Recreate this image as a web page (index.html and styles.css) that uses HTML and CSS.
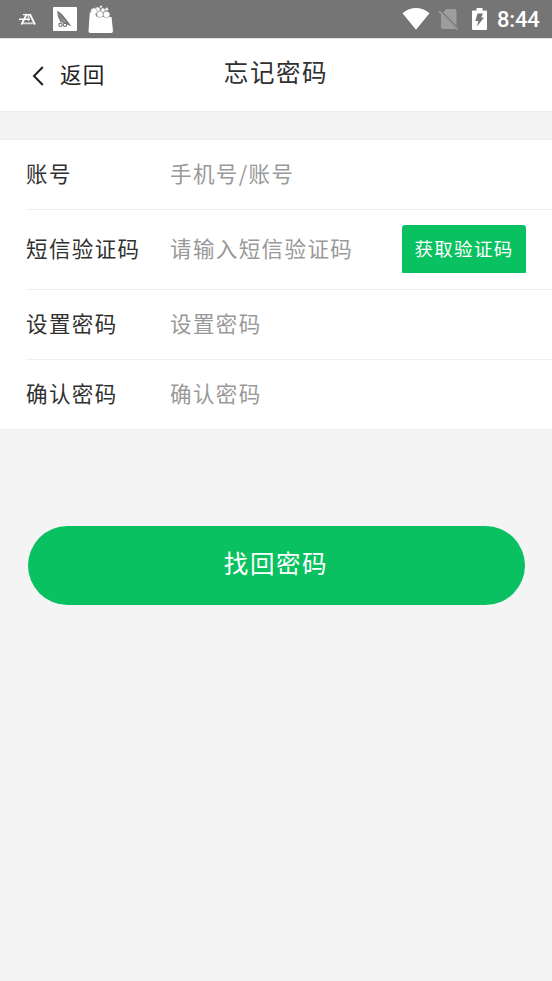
FILE: index.html
```html
<!DOCTYPE html>
<html lang="zh-CN">
<head>
<meta charset="utf-8">
<title>忘记密码</title>
<link rel="stylesheet" href="styles.css">
</head>
<body>
<div class="status">
  <svg class="ico-a" width="18" height="14" viewBox="0 0 18 14" fill="none" stroke="#fff"><path stroke-width="1.8" d="M10.8 1L16 11.5M7.8 1L2.5 11.5"/><path stroke-width="1.4" d="M4 1.6H11M0 6.3H11"/><path stroke-width="1.6" opacity=".75" d="M4 10.4H14.5M9.5 2V8"/></svg>
  <svg class="ico-pic" width="24" height="24" viewBox="0 0 24 24"><rect width="24" height="24" rx="1" fill="#fff"/><path d="M4.2 3.5Q10 7 13 12L18.5 19.5L13 17L7 14.5Q4 9 4.2 3.5Z" fill="#757575"/><path d="M5 7L13 15M5 11L12 15" stroke="#bbb" stroke-width=".6"/><g fill="none" stroke="#757575" stroke-width="1.1"><circle cx="7.5" cy="17.8" r="1.7"/><circle cx="12" cy="17.8" r="1.7"/></g></svg>
  <svg class="ico-bag" width="26" height="28" viewBox="0 0 26 28"><path d="M1.5 12H23.5L25 26Q25 28 23 28H2.5Q.3 28 .5 26Z" fill="#fff"/><g fill="#fff" stroke="#858585" stroke-width=".5"><circle cx="9.5" cy="4.8" r="2.7"/><circle cx="15" cy="5.2" r="2.2"/><circle cx="6" cy="6.3" r="3.3"/><circle cx="12" cy="9.3" r="3.2"/><circle cx="18.5" cy="9.5" r="3.3"/><circle cx="13" cy="1.7" r="1.3"/><circle cx="18.7" cy="4.2" r="1.6"/></g><path d="M1.8 7.5H6L9 12H1.5Z" fill="#fff"/></svg>
  <svg class="ico-wifi" width="28" height="22" viewBox="0 0 28 22"><path d="M.5 5.2Q14-5 27.5 5.2L14 21.8Z" fill="#fff"/></svg>
  <svg class="ico-sim" width="21" height="22" viewBox="0 0 21 22"><path d="M8.5 1H16.5Q18.5 1 18.5 3V17.8L5 4.3ZM3 5.5L18 20.5Q17.5 21 16.5 21H5Q3 21 3 19Z" fill="#9d9d9d"/><path d="M1 3L19.5 21.5" stroke="#9d9d9d" stroke-width="1.6"/></svg>
  <svg class="ico-bat" width="15" height="22" viewBox="0 0 15 22"><path d="M1 2.5H4.5V0H10.5V2.5H14Q15 2.5 15 3.5V21Q15 22 14 22H1Q0 22 0 21V3.5Q0 2.5 1 2.5Z" fill="#fff"/><path d="M5.5 5.5H11L9.2 9.5H12L5 18.5L6.3 13H3.3Z" fill="#757575"/></svg>
  <span class="time">8:44</span>
</div>
<header class="nav">
  <a class="back"><svg width="12" height="20" viewBox="0 0 12 20" fill="none" stroke="#222" stroke-width="2"><path d="M10.8 1L2 10L10.8 19"/></svg><span>返回</span></a>
  <h1>忘记密码</h1>
</header>
<main>
  <div class="form">
    <div class="row"><label>账号</label><span class="hint">手机号/账号</span></div>
    <div class="row tall"><label>短信验证码</label><span class="hint">请输入短信验证码</span><button class="code">获取验证码</button></div>
    <div class="row"><label>设置密码</label><span class="hint">设置密码</span></div>
    <div class="row"><label>确认密码</label><span class="hint">确认密码</span></div>
  </div>
  <button class="submit">找回密码</button>
</main>
</body>
</html>
```
FILE: styles.css
```css
* { box-sizing: border-box; }
body {
  margin: 0;
  min-height: 981px;
  background: #f4f4f4;
  color: #303030;
  font-family: "Noto Sans CJK SC", sans-serif;
}
svg { display: block; flex: none; }
button { border: 0; padding: 0; font-family: inherit; color: #fff; background: #09c160; }
.status {
  display: flex;
  height: 38px;
  padding-left: 19px;
  background: #757575;
  color: #fff;
}
.ico-a { margin-top: 13px; }
.ico-pic { margin: 7px 0 0 16px; }
.ico-bag { margin: 5px 0 0 11px; }
.ico-wifi { margin: 8px 0 0 288px; }
.ico-sim { margin: 8px 0 0 8px; }
.ico-bat { margin: 8px 0 0 13px; }
.time {
  margin-left: 10px;
  font: 500 22px/40px Roboto, sans-serif;
  letter-spacing: -0.2px;
}
.nav {
  display: grid;
  grid-template-columns: 1fr auto 1fr;
  height: 74px;
  border-top: 1px solid #e4e4e4;
  border-bottom: 1px solid #ebebeb;
  background: #fff;
}
.back {
  display: flex;
  align-items: center;
  height: 72px;
  padding-left: 32px;
  font-size: 21.5px;
  letter-spacing: 1.3px;
  color: #222;
}
.back svg { margin-top: 2px; }
.back span { margin-left: 16px; padding-bottom: 3px; }
.nav h1 {
  margin: 0;
  font-size: 24.5px;
  font-weight: 400;
  line-height: 66px;
  letter-spacing: 1.6px;
}
.form {
  margin-top: 27px;
  padding-left: 26px;
  border-top: 1px solid #efefef;
  border-bottom: 1px solid #efefef;
  background: #fff;
}
.row {
  display: flex;
  align-items: center;
  height: 70px;
  padding-right: 26px;
  border-bottom: 1px solid #efefef;
  font-size: 21.5px;
  letter-spacing: 1.4px;
}
.row:last-child { border-bottom: 0; height: 69px; }
.tall { height: 80px; }
.row label { width: 144px; padding-bottom: 4px; }
.hint { color: #999; padding-bottom: 4px; }
.code {
  width: 124px;
  height: 48px;
  margin: 0 0 2px auto;
  border-radius: 3px 3px 1px 1px;
  padding-bottom: 2px;
  font-size: 18.5px;
  letter-spacing: 1.3px;
}
.submit {
  display: block;
  width: 497px;
  height: 79px;
  margin: 96px 0 0 27.5px;
  padding-bottom: 7px;
  border-radius: 40px;
  font-size: 24.5px;
  letter-spacing: 1.6px;
}
```
